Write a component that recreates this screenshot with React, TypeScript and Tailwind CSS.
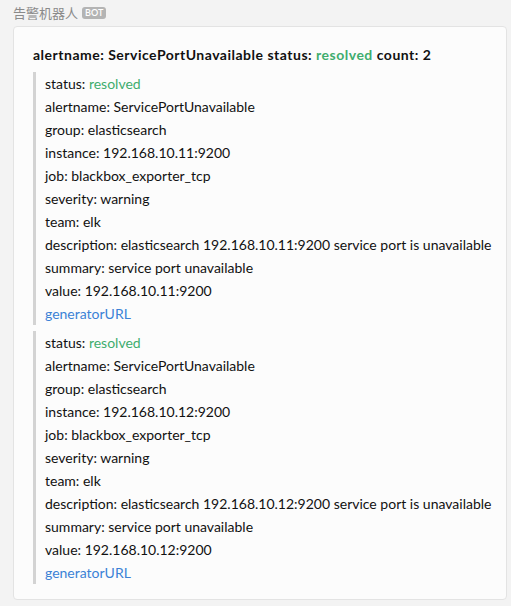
const alerts = [
  { instance: "192.168.10.11:9200" },
  { instance: "192.168.10.12:9200" },
];

function AlertBlock({ instance }: { instance: string }) {
  const rows: [string, string][] = [
    ["alertname", "ServicePortUnavailable"],
    ["group", "elasticsearch"],
    ["instance", instance],
    ["job", "blackbox_exporter_tcp"],
    ["severity", "warning"],
    ["team", "elk"],
    ["description", `elasticsearch ${instance} service port is unavailable`],
    ["summary", "service port unavailable"],
    ["value", instance],
  ];
  return (
    <div className="border-l-[3px] border-[#d3d3d3] pl-[9px] whitespace-nowrap">
      <div>
        status: <span className="text-[#3fad6e]">resolved</span>
      </div>
      {rows.map(([k, v]) => (
        <div key={k}>
          {k}: {v}
        </div>
      ))}
      <div className="text-[#3b82d6]">generatorURL</div>
    </div>
  );
}

export default function App() {
  return (
    <div className="min-h-[606px] bg-[#f3f3f3] pl-[13px] pr-[4px] pt-[5px] pb-[5px] font-['Lato','Open_Sans',sans-serif]">
      <div className="flex items-center gap-[4px] h-[16px] text-[13px] text-[#8a8a8a]">
        <span className="font-['Noto_Sans_CJK_SC',sans-serif]">告警机器人</span>
        <span className="rounded-[3px] bg-[#b4b4b4] px-[3px] text-[9px] leading-[12px] font-semibold text-white">
          BOT
        </span>
      </div>
      <div className="mt-[5px] rounded-[4px] border border-[#e3e3e3] bg-[#fcfcfc] pl-[19px] pr-[4px] pt-[16px] pb-[15px] text-[14px] leading-[23px] text-[#111]">
        <div className="mb-[6px] font-bold tracking-[0.5px] whitespace-nowrap">
          alertname: ServicePortUnavailable status:{" "}
          <span className="text-[#3fad6e]">resolved</span> count: 2
        </div>
        <div className="flex flex-col gap-[6px]">
          {alerts.map((a) => (
            <AlertBlock key={a.instance} instance={a.instance} />
          ))}
        </div>
      </div>
    </div>
  );
}
